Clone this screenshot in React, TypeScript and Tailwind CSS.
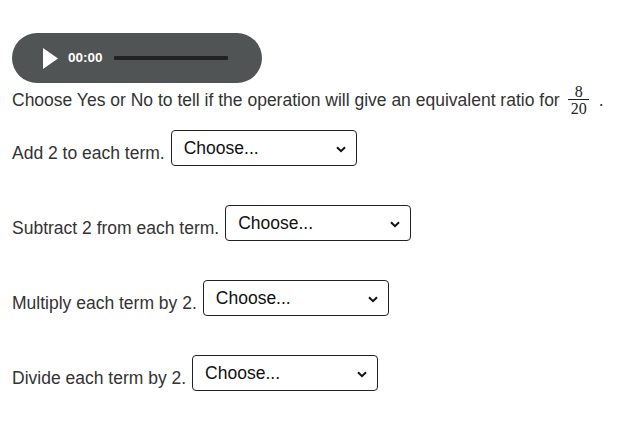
import React from "react";

const rows = [
    "Add 2 to each term.",
    "Subtract 2 from each term.",
    "Multiply each term by 2.",
    "Divide each term by 2.",
];

function FakeSelect() {
    return (
        <div className="ml-[6px] w-[186px] h-[36px] border border-[#222] rounded-[4px] bg-white flex justify-between pl-3 pr-[10px] pt-[7px] text-[#111]">
            <span className="leading-[20px]">Choose...</span>
            <svg width="10" height="7" viewBox="0 0 10 7" className="mt-[8px]">
                <path d="M1 1.2 L5 5.2 L9 1.2" fill="none" stroke="#111" strokeWidth="2" />
            </svg>
        </div>
    );
}

export default function App() {
    return (
        <div className="pl-3 pt-[33px] text-[17.5px] text-[#333] font-['Liberation_Sans',Arial,sans-serif]">
            <div className="w-[250px] h-[50px] rounded-full bg-[#505455] flex items-center">
                <svg width="15" height="21" viewBox="0 0 15 21" className="ml-[31px]">
                    <path d="M0 0 L15 10.5 L0 21 Z" fill="#fff" />
                </svg>
                <span className="ml-[10px] text-white font-bold text-[13.5px] leading-none">00:00</span>
                <div className="ml-[11px] w-[114px] h-[4px] bg-[#222] rounded-[1px]" />
            </div>

            <div className="flex items-center mt-[1px] h-[32px]">
                <span className="leading-[20px]">
                    Choose Yes or No to tell if the operation will give an equivalent ratio for
                </span>
                <span className="ml-[8px] flex flex-col items-center font-['Liberation_Serif',serif] text-[16px] leading-[13px] text-[#222]">
                    <span className="px-[3px]">8</span>
                    <span className="w-[21px] border-t border-[#222] mt-[1px] mb-[2px]" />
                    <span className="px-[3px]">20</span>
                </span>
                <span className="ml-[9px] leading-[20px]">.</span>
            </div>

            <div className="mt-[14px] flex flex-col gap-[39px]">
                {rows.map((r) => (
                    <div key={r} className="flex items-end">
                        <span className="leading-[20px] mb-[3px]">{r}</span>
                        <FakeSelect />
                    </div>
                ))}
            </div>
        </div>
    );
}
